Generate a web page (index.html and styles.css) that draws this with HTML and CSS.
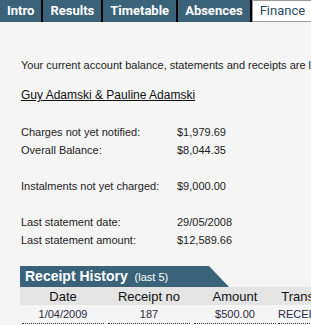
FILE: index.html
```html
<!DOCTYPE html>
<html lang="en">

<head>
    <meta charset="UTF-8">
    <meta name="viewport" content="width=device-width, initial-scale=1.0">
    <title>Finance</title>
    <link rel="stylesheet" href="styles.css">
</head>

<body>

    <div class="tabs">
        <a class="tab">Intro</a>
        <a class="tab">Results</a>
        <a class="tab">Timetable</a>
        <a class="tab">Absences</a>
        <a class="tab active">Finance</a>
    </div>

    <div class="content">
        <p class="intro">Your current account balance, statements and receipts are listed below.</p>

        <p class="names">Guy Adamski &amp; Pauline Adamski</p>

        <div class="group first">
            <div class="row"><span class="label">Charges not yet notified:</span><span>$1,979.69</span></div>
            <div class="row"><span class="label">Overall Balance:</span><span>$8,044.35</span></div>
        </div>

        <div class="group">
            <div class="row"><span class="label">Instalments not yet charged:</span><span>$9,000.00</span></div>
        </div>

        <div class="group">
            <div class="row"><span class="label">Last statement date:</span><span>29/05/2008</span></div>
            <div class="row"><span class="label">Last statement amount:</span><span>$12,589.66</span></div>
        </div>

        <div class="section">
            <h2 class="section-title">Receipt History <small>(last 5)</small></h2>
            <table class="receipts">
                <thead>
                    <tr>
                        <th>Date</th>
                        <th>Receipt no</th>
                        <th>Amount</th>
                        <th class="type">Transaction</th>
                    </tr>
                </thead>
                <tbody>
                    <tr>
                        <td><span>1/04/2009</span></td>
                        <td><span>187</span></td>
                        <td><span>$500.00</span></td>
                        <td class="type"><span>RECEIPT</span></td>
                    </tr>
                </tbody>
            </table>
        </div>
    </div>

</body>

</html>
```

FILE: styles.css
```css
body {
    font-family: 'Liberation Sans', Arial, sans-serif;
    font-size: 11px;
    background-color: #f5f5f5;
    color: #222;
    margin: 0;
    padding: 0;
    overflow: hidden;
}

.tabs {
    display: flex;
    gap: 2px;
    width: max-content;
    background-color: #000;
}

.tab {
    display: block;
    height: 22px;
    line-height: 22px;
    padding: 0 7px;
    font-family: Roboto, sans-serif;
    font-size: 13px;
    font-weight: bold;
    color: #fff;
    background-color: #3a6279;
}

.tab.active {
    height: 20px;
    line-height: 20px;
    padding: 0 7px;
    font-weight: normal;
    color: #2b4a5f;
    background-color: #fff;
    border: 1px solid #9a9a9a;
}

.content {
    padding: 0 0 0 21px;
    white-space: nowrap;
}

.intro {
    margin: 36px 0 0;
    line-height: 14px;
}

.names {
    margin: 16px 0 0;
    font-size: 12px;
    line-height: 14px;
    text-decoration: underline;
    color: #111;
}

.group {
    margin-top: 18px;
}

.group.first {
    margin-top: 21px;
}

.row {
    display: flex;
    height: 18px;
    line-height: 18px;
}

.label {
    width: 156px;
}

.section {
    margin-top: 17px;
    margin-left: -1px;
}

.section-title {
    margin: 0;
    width: 204px;
    height: 21px;
    line-height: 21px;
    padding-left: 5px;
    font-size: 14px;
    font-weight: bold;
    color: #fff;
    background-color: #3a6279;
    clip-path: polygon(0 0, 189px 0, 209px 21px, 0 21px);
}

.section-title small {
    font-size: 11px;
    font-weight: normal;
    margin-left: 3px;
}

.receipts {
    table-layout: fixed;
    width: 332px;
    border-collapse: collapse;
    border-spacing: 0;
}

.receipts th {
    width: 86px;
    height: 18px;
    padding: 0;
    font-size: 13px;
    font-weight: normal;
    color: #111;
    background-color: #e4e4e4;
}

.receipts td {
    padding: 0;
    text-align: center;
    color: #2b2640;
}

.receipts td span {
    display: block;
    height: 18px;
    line-height: 18px;
    margin: 0 2px;
    border-bottom: 1px dotted #333;
}

.receipts .type {
    width: 74px;
}

.receipts td.type {
    text-align: left;
}

.receipts td.type span {
    margin: 0;
}
```
